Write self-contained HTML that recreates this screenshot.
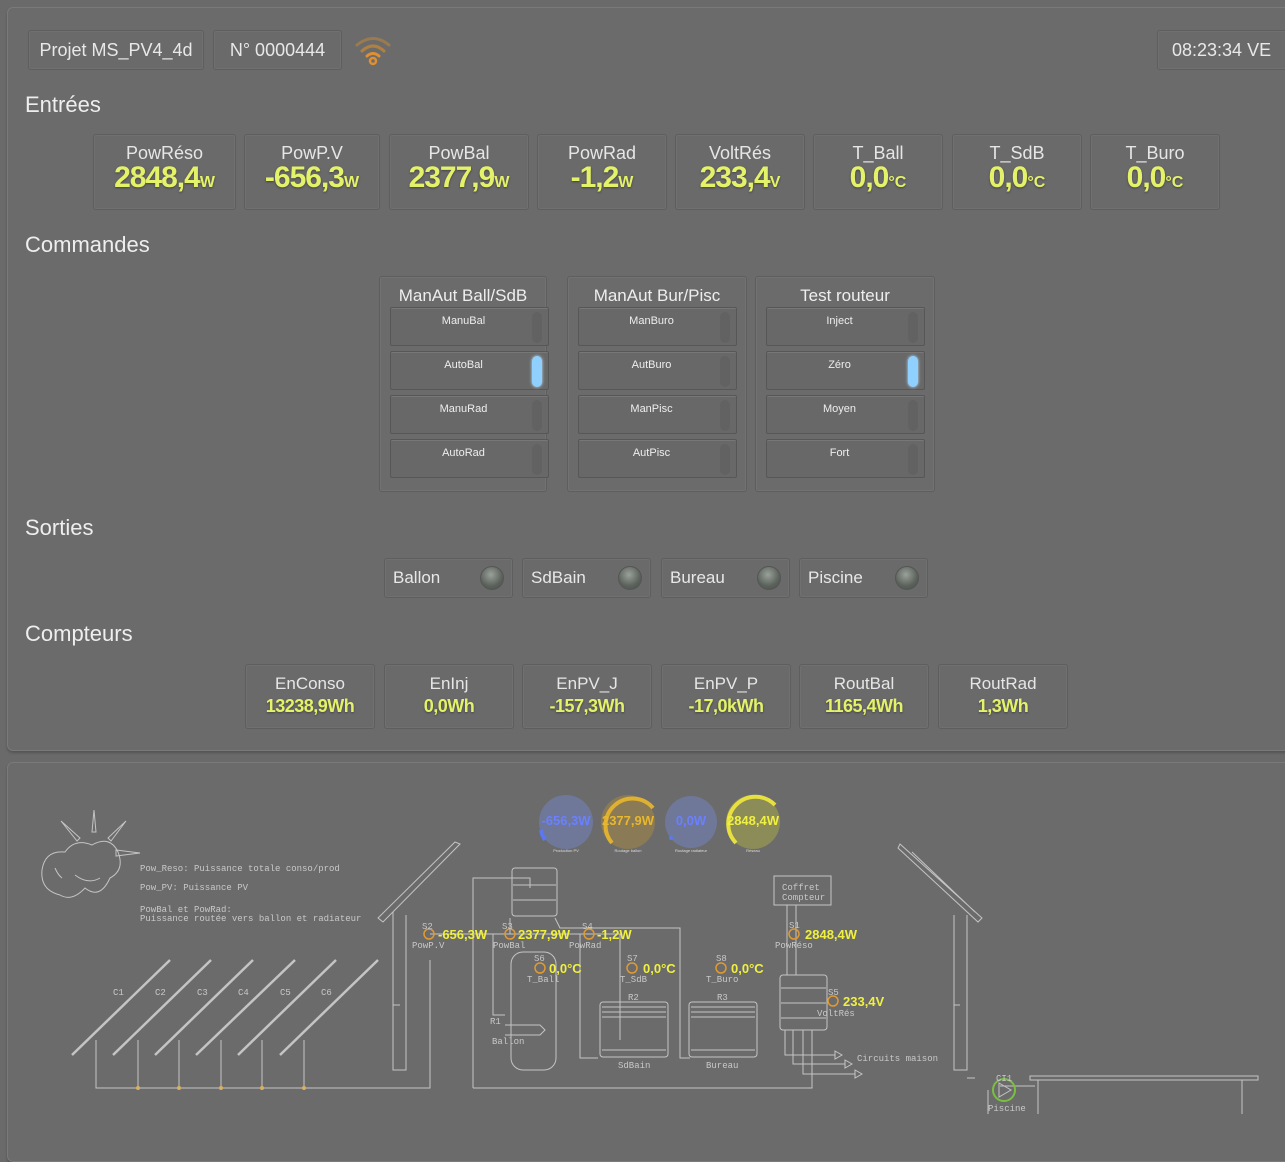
<!DOCTYPE html>
<html><head><meta charset="utf-8">
<style>
*{box-sizing:border-box;margin:0;padding:0}
body{width:1285px;height:1114px;overflow:hidden;background:#6a6a6a;font-family:"Liberation Sans",sans-serif;color:#e8e8e8;position:relative}
.panel{position:absolute;left:7px;width:1290px;border:1px solid #7a7a7a;border-radius:6px;background:#6b6b6b;box-shadow:0 2px 2px #555}
.box{position:absolute;border:1px solid #5e5e5e;border-radius:3px;background:#6a6a6a;box-shadow:inset 0 0 0 1px #707070;text-align:center}
.h{position:absolute;left:25px;font-size:22px;color:#eee}
.lbl{font-size:18px;color:#e6e6e6;margin-top:8px;line-height:20px}
.val{font-size:30px;font-weight:bold;color:#e4f26a;line-height:30px;letter-spacing:-1px;text-shadow:0 1px 2px #444}
.val small{font-size:16px;letter-spacing:0}
.grp{position:absolute;top:276px;height:216px;border:1px solid #5e5e5e;border-radius:3px;box-shadow:inset 0 0 0 1px #727272}
.grp .t{text-align:center;font-size:17px;margin-top:9px;color:#eee}
.btn{position:absolute;left:10px;width:159px;height:39px;border:1px solid #575757;border-radius:2px;background:#686868;box-shadow:inset 0 1px 0 #777;font-size:11px;text-align:center;padding-top:7px;padding-right:12px;color:#eee}
.ind{position:absolute;right:6px;top:4px;width:10px;height:31px;border-radius:5px;background:#626262}
.ind.on{background:#8fd0ff;box-shadow:0 0 3px #bfe6ff}
.out{position:absolute;top:558px;width:129px;height:40px;font-size:17px;text-align:left;padding:9px 0 0 8px}
.led{position:absolute;right:8px;top:7px;width:24px;height:24px;border-radius:50%;background:radial-gradient(circle at 45% 35%,#9aa09a,#5b615b 60%,#4a4f4a);border:1px solid #555}
.cnt .lbl{font-size:17px;margin-top:9px}
.cnt .val{font-size:18px;line-height:24px;letter-spacing:-0.5px}
</style></head><body>
<div class="panel" style="top:7px;height:744px"></div>
<div class="panel" style="top:762px;height:400px"></div>

<div class="box" style="left:28px;top:30px;width:176px;height:40px;font-size:18px;padding-top:9px">Projet MS_PV4_4d</div>
<div class="box" style="left:213px;top:30px;width:129px;height:40px;font-size:18px;padding-top:9px">N° 0000444</div>
<svg style="position:absolute;left:354px;top:34px" width="38" height="32" viewBox="0 0 38 32">
<path d="M3 11 Q19 -2 35 11" stroke="#9a7a50" stroke-width="3" fill="none" stroke-linecap="round"/>
<path d="M8 17 Q19 7 30 17" stroke="#b08040" stroke-width="3" fill="none" stroke-linecap="round"/>
<path d="M13 22 Q19 17 25 22" stroke="#e09030" stroke-width="3" fill="none" stroke-linecap="round"/>
<circle cx="19" cy="27" r="3" fill="none" stroke="#e09030" stroke-width="2.5"/></svg>
<div class="box" style="left:1157px;top:30px;width:140px;height:40px;font-size:18px;padding-top:9px;text-align:left;padding-left:14px">08:23:34 VE</div>

<div class="h" style="top:92px">Entrées</div>
<div class="box" style="left:93px;top:134px;width:143px;height:76px"><div class="lbl">PowRéso</div><div class="val">2848,4<small>W</small></div></div>
<div class="box" style="left:244px;top:134px;width:136px;height:76px"><div class="lbl">PowP.V</div><div class="val">-656,3<small>W</small></div></div>
<div class="box" style="left:389px;top:134px;width:140px;height:76px"><div class="lbl">PowBal</div><div class="val">2377,9<small>W</small></div></div>
<div class="box" style="left:537px;top:134px;width:130px;height:76px"><div class="lbl">PowRad</div><div class="val">-1,2<small>W</small></div></div>
<div class="box" style="left:675px;top:134px;width:130px;height:76px"><div class="lbl">VoltRés</div><div class="val">233,4<small>V</small></div></div>
<div class="box" style="left:813px;top:134px;width:130px;height:76px"><div class="lbl">T_Ball</div><div class="val">0,0<small>°C</small></div></div>
<div class="box" style="left:952px;top:134px;width:130px;height:76px"><div class="lbl">T_SdB</div><div class="val">0,0<small>°C</small></div></div>
<div class="box" style="left:1090px;top:134px;width:130px;height:76px"><div class="lbl">T_Buro</div><div class="val">0,0<small>°C</small></div></div>

<div class="h" style="top:232px">Commandes</div>
<div class="grp" style="left:379px;width:168px"><div class="t">ManAut Ball/SdB</div>
<div class="btn" style="top:30px">ManuBal<div class="ind"></div></div>
<div class="btn" style="top:74px">AutoBal<div class="ind on"></div></div>
<div class="btn" style="top:118px">ManuRad<div class="ind"></div></div>
<div class="btn" style="top:162px">AutoRad<div class="ind"></div></div></div>
<div class="grp" style="left:567px;width:180px"><div class="t">ManAut Bur/Pisc</div>
<div class="btn" style="top:30px">ManBuro<div class="ind"></div></div>
<div class="btn" style="top:74px">AutBuro<div class="ind"></div></div>
<div class="btn" style="top:118px">ManPisc<div class="ind"></div></div>
<div class="btn" style="top:162px">AutPisc<div class="ind"></div></div></div>
<div class="grp" style="left:755px;width:180px"><div class="t">Test routeur</div>
<div class="btn" style="top:30px">Inject<div class="ind"></div></div>
<div class="btn" style="top:74px">Zéro<div class="ind on"></div></div>
<div class="btn" style="top:118px">Moyen<div class="ind"></div></div>
<div class="btn" style="top:162px">Fort<div class="ind"></div></div></div>

<div class="h" style="top:515px">Sorties</div>
<div class="box out" style="left:384px">Ballon<div class="led"></div></div>
<div class="box out" style="left:522px">SdBain<div class="led"></div></div>
<div class="box out" style="left:661px">Bureau<div class="led"></div></div>
<div class="box out" style="left:799px">Piscine<div class="led"></div></div>

<div class="h" style="top:621px">Compteurs</div>
<div class="box cnt" style="left:245px;top:664px;width:130px;height:65px"><div class="lbl">EnConso</div><div class="val">13238,9Wh</div></div>
<div class="box cnt" style="left:384px;top:664px;width:130px;height:65px"><div class="lbl">EnInj</div><div class="val">0,0Wh</div></div>
<div class="box cnt" style="left:522px;top:664px;width:130px;height:65px"><div class="lbl">EnPV_J</div><div class="val">-157,3Wh</div></div>
<div class="box cnt" style="left:661px;top:664px;width:130px;height:65px"><div class="lbl">EnPV_P</div><div class="val">-17,0kWh</div></div>
<div class="box cnt" style="left:799px;top:664px;width:130px;height:65px"><div class="lbl">RoutBal</div><div class="val">1165,4Wh</div></div>
<div class="box cnt" style="left:938px;top:664px;width:130px;height:65px"><div class="lbl">RoutRad</div><div class="val">1,3Wh</div></div>

<svg style="position:absolute;left:0;top:0" width="1285" height="1114" viewBox="0 0 1285 1114" font-family="Liberation Mono, monospace">
<g stroke="#c4c4c4" stroke-width="1" fill="none">
<path d="M94 810 L96 832 L92 832 Z M61 821 L80 838 L77 841 Z M126 821 L108 838 L111 841 Z M140 853 L116 850 L116 856 Z"/>
<path d="M60 895 Q40 890 42 870 Q45 850 65 852 Q75 838 92 845 Q110 835 118 852 Q125 870 110 878 Q100 900 85 888 Q72 902 60 895 Z"/>
<path d="M75 875 Q88 885 100 878 M55 868 Q58 875 62 878"/>
<g stroke-width="2.5">
<path d="M72 1055 L170 960 M113 1055 L211 960 M155 1055 L253 960 M196 1055 L295 960 M238 1055 L336 960 M280 1055 L378 960"/></g>
<path d="M96 1040 V1088 H430 V960 M138 1040 V1088 M179 1040 V1088 M221 1040 V1088 M262 1040 V1088 M304 1040 V1088"/>
<path d="M378 918 L455 842 L460 844 L383 922 Z"/>
<path d="M393 912 V1070 H406 V915 M393 1005 H400"/>
<path d="M473 1088 V878 H530 V888 M473 1088 H812 V1030"/>
<rect x="512" y="868" width="45" height="48" rx="3"/>
<path d="M513 885 H556 M513 900 H556"/>
<path d="M430 934 H620 V1040 M510 918 V934 M555 918 L560 928 H680 V1058 H690"/>
<path d="M493 934 V1015 H505 M580 934 V1058 H598"/>
<rect x="511" y="952" width="45" height="118" rx="12"/>
<path d="M505 1025 H540 L545 1030 L540 1035 H505"/>
<rect x="600" y="1002" width="68" height="55" rx="3"/>
<path d="M602 1007 H666 M602 1012 H666 M602 1017 H666 M602 1050 H666"/>
<rect x="689" y="1002" width="68" height="55" rx="3"/>
<path d="M691 1007 H755 M691 1012 H755 M691 1017 H755 M691 1050 H755"/>
<rect x="774" y="876" width="57" height="29"/>
<path d="M787 905 V975 M796 905 V975"/>
<rect x="780" y="975" width="47" height="55" rx="3"/>
<path d="M781 988 H826 M781 1003 H826 M781 1018 H826"/>
<path d="M785 1030 V1055 H835 M793 1030 V1064 H845 M803 1030 V1074 H855"/>
<path d="M835 1051 L842 1055 L835 1059 Z M845 1060 L852 1064 L845 1068 Z M855 1070 L862 1074 L855 1078 Z"/>
<path d="M900 844 L982 918 L978 922 L898 848 Z M912 852 L975 912"/>
<path d="M954 915 V1070 H967 V915 M954 1005 H960 M967 1078 H975"/>
<path d="M1030 1076 H1258 V1080 H1030 Z M1038 1080 V1114 M1242 1080 V1114 M1000 1086 H1035 M988 1090 V1114"/>
<circle cx="1004" cy="1090" r="11" stroke="#7ac040" stroke-width="2"/>
<path d="M999 1083 L1011 1090 L999 1097 Z"/>
</g>
<g fill="#d8b060" stroke="none"><circle cx="138" cy="1088" r="2"/><circle cx="179" cy="1088" r="2"/><circle cx="221" cy="1088" r="2"/><circle cx="262" cy="1088" r="2"/><circle cx="304" cy="1088" r="2"/></g>
<g fill="none" stroke="#e09a30" stroke-width="1.5">
<circle cx="429" cy="934" r="5"/><circle cx="510" cy="934" r="5"/><circle cx="589" cy="934" r="5"/><circle cx="540" cy="968" r="5"/><circle cx="632" cy="968" r="5"/><circle cx="721" cy="968" r="5"/><circle cx="794" cy="934" r="5"/><circle cx="833" cy="1001" r="5"/></g>
<g fill="#c8c8c8" font-size="9">
<text x="140" y="871">Pow_Reso: Puissance totale conso/prod</text>
<text x="140" y="890">Pow_PV: Puissance PV</text>
<text x="140" y="912">PowBal et PowRad:</text>
<text x="140" y="921">Puissance routée vers ballon et radiateur</text>
<text x="113" y="995">C1</text><text x="155" y="995">C2</text><text x="197" y="995">C3</text><text x="238" y="995">C4</text><text x="280" y="995">C5</text><text x="321" y="995">C6</text>
<text x="422" y="929">S2</text><text x="412" y="948">PowP.V</text>
<text x="502" y="929">S3</text><text x="493" y="948">PowBal</text>
<text x="582" y="929">S4</text><text x="569" y="948">PowRad</text>
<text x="534" y="961">S6</text><text x="527" y="982">T_Ball</text>
<text x="627" y="961">S7</text><text x="620" y="982">T_SdB</text>
<text x="716" y="961">S8</text><text x="706" y="982">T_Buro</text>
<text x="628" y="1000">R2</text><text x="717" y="1000">R3</text>
<text x="618" y="1068">SdBain</text><text x="706" y="1068">Bureau</text>
<text x="490" y="1024">R1</text><text x="492" y="1044">Ballon</text>
<text x="782" y="890">Coffret</text><text x="782" y="900">Compteur</text>
<text x="789" y="928">S1</text><text x="775" y="948">PowRéso</text>
<text x="828" y="995">S5</text><text x="817" y="1016">VoltRés</text>
<text x="857" y="1061">Circuits maison</text>
<text x="996" y="1081">CI1</text><text x="988" y="1111">Piscine</text>
</g>
<g fill="#f0f040" font-size="13" font-weight="bold" font-family="Liberation Sans, sans-serif">
<text x="438" y="939">-656,3W</text><text x="518" y="939">2377,9W</text><text x="597" y="939">-1,2W</text>
<text x="549" y="973">0,0°C</text><text x="643" y="973">0,0°C</text><text x="731" y="973">0,0°C</text>
<text x="805" y="939">2848,4W</text><text x="843" y="1006">233,4V</text></g>
<circle cx="566" cy="822" r="27" fill="#6f7898"/>
<path d="M545 840 A27 27 0 0 1 541 830" stroke="#5a78f0" stroke-width="4" fill="none"/>
<circle cx="628" cy="822" r="27" fill="#8a7a55"/>
<path d="M612 843 A26 26 0 1 1 653 808" stroke="#e0b030" stroke-width="4" fill="none"/>
<circle cx="691" cy="822" r="26" fill="#6f7898"/>
<circle cx="671" cy="838" r="2" fill="#5a78f0"/>
<circle cx="753" cy="822" r="27" fill="#8c8c58"/>
<path d="M736 843 A26 26 0 1 1 775 805" stroke="#e8e040" stroke-width="4" fill="none"/>
<g font-family="Liberation Sans, sans-serif" font-weight="bold" font-size="13" text-anchor="middle">
<text x="566" y="825" fill="#6a80ff">-656,3W</text>
<text x="628" y="825" fill="#e8b830">2377,9W</text>
<text x="691" y="825" fill="#6a80ff">0,0W</text>
<text x="753" y="825" fill="#f0f040">2848,4W</text></g>
<g font-size="4" fill="#ddd" text-anchor="middle" font-family="Liberation Sans, sans-serif">
<text x="566" y="852">Production PV</text><text x="628" y="852">Routage ballon</text><text x="691" y="852">Routage radiateur</text><text x="753" y="852">Réseau</text></g>
</svg>
</body></html>
